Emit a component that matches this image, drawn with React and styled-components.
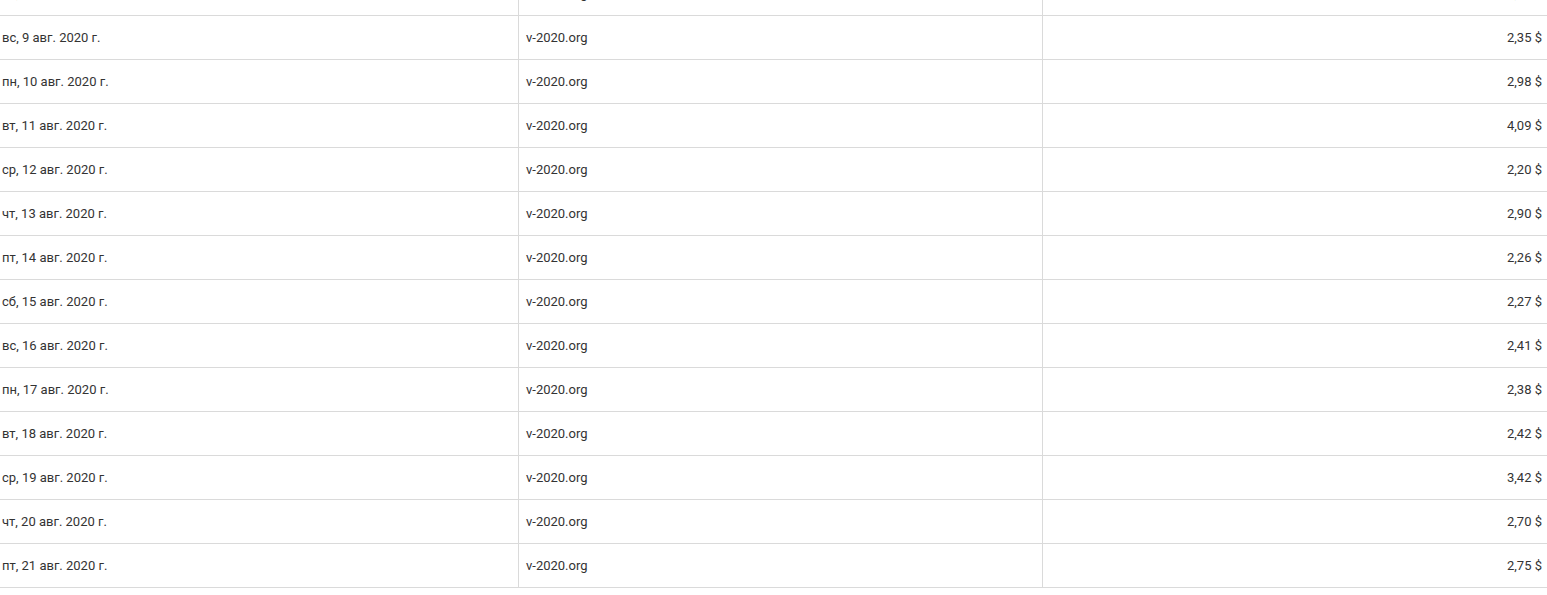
import React from "react";
import styled, { createGlobalStyle } from "styled-components";

const GlobalStyle = createGlobalStyle`
  body {
    margin: 0;
    background: #fff;
    font-family: Roboto, "Noto Sans", Arial, sans-serif;
  }
`;

const Viewport = styled.div`
  height: 595px;
  overflow: hidden;
`;

const Table = styled.div`
  margin-top: -28px;
  width: 100%;
`;

const Row = styled.div`
  display: grid;
  grid-template-columns: 519px 524px 1fr;
  height: 44px;
  box-sizing: border-box;
  border-bottom: 1px solid #dadada;
`;

const Cell = styled.div`
  display: flex;
  align-items: center;
  box-sizing: border-box;
  font-size: 13px;
  color: #333;
  white-space: nowrap;
  border-right: ${(p) => (p.$last ? "none" : "1px solid #dadada")};
  justify-content: ${(p) => (p.$right ? "flex-end" : "flex-start")};
  padding: ${(p) => p.$pad};
`;

const rows = [
  ["сб, 8 авг. 2020 г.", "2,61 $"],
  ["вс, 9 авг. 2020 г.", "2,35 $"],
  ["пн, 10 авг. 2020 г.", "2,98 $"],
  ["вт, 11 авг. 2020 г.", "4,09 $"],
  ["ср, 12 авг. 2020 г.", "2,20 $"],
  ["чт, 13 авг. 2020 г.", "2,90 $"],
  ["пт, 14 авг. 2020 г.", "2,26 $"],
  ["сб, 15 авг. 2020 г.", "2,27 $"],
  ["вс, 16 авг. 2020 г.", "2,41 $"],
  ["пн, 17 авг. 2020 г.", "2,38 $"],
  ["вт, 18 авг. 2020 г.", "2,42 $"],
  ["ср, 19 авг. 2020 г.", "3,42 $"],
  ["чт, 20 авг. 2020 г.", "2,70 $"],
  ["пт, 21 авг. 2020 г.", "2,75 $"],
];

const App = () => {
  return (
    <Viewport>
      <GlobalStyle />
      <Table>
        {rows.map(([date, amount]) => (
          <Row key={date}>
            <Cell $pad="0 0 0 2px">{date}</Cell>
            <Cell $pad="0 0 0 7px">v-2020.org</Cell>
            <Cell $pad="0 5px 0 0" $right $last>
              {amount}
            </Cell>
          </Row>
        ))}
      </Table>
    </Viewport>
  );
};

export default App;
